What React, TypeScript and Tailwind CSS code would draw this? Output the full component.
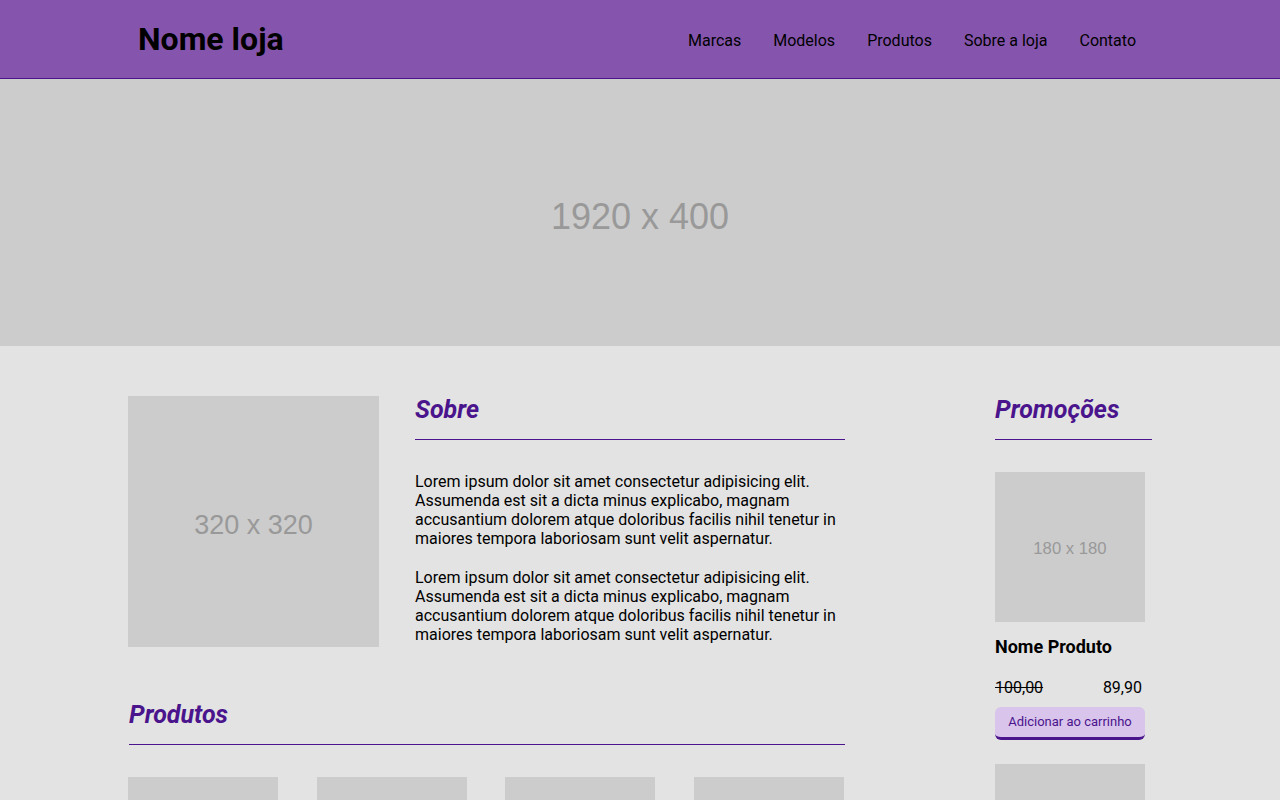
const navLinks = ["Marcas", "Modelos", "Produtos", "Sobre a loja", "Contato"];

const lorem =
  "Lorem ipsum dolor sit amet consectetur adipisicing elit. Assumenda est sit a dicta minus explicabo, magnam accusantium dolorem atque doloribus facilis nihil tenetur in maiores tempora laboriosam sunt velit aspernatur.";

const Placeholder = ({
  label,
  className,
  textClass,
}: {
  label: string;
  className: string;
  textClass: string;
}) => (
  <div
    className={`bg-[#cccccc] flex items-center justify-center shrink-0 ${className}`}
  >
    <span
      className={`text-[#999999] ${textClass}`}
      style={{ fontFamily: '"Liberation Sans", Arial, sans-serif' }}
    >
      {label}
    </span>
  </div>
);

const SectionTitle = ({ title }: { title: string }) => (
  <h2 className="text-[25px] font-bold italic text-[#4a148c] leading-[28px] pb-[15px] border-b border-b-[#4a148c]">
    {title}
  </h2>
);

const App = () => {
  return (
    <div
      className="min-h-screen bg-[#e3e3e3] text-black"
      style={{ fontFamily: "Roboto, 'Noto Sans', sans-serif" }}
    >
      <header className="bg-[#8555ad] border-b border-b-[#4a148c]">
        <div className="w-[1024px] mx-auto h-[78px] flex items-center justify-between">
          <h1 className="pl-[10px] text-[32px] font-bold leading-none">
            Nome loja
          </h1>
          <nav className="flex items-center pt-[4px]">
            {navLinks.map((link) => (
              <a key={link} href="#" className="px-4 text-base">
                {link}
              </a>
            ))}
          </nav>
        </div>
      </header>

      <Placeholder
        label="1920 x 400"
        className="w-full h-[267px] pt-[9px]"
        textClass="text-[36px]"
      />

      <main className="w-[1024px] mx-auto pt-[50px] flex justify-between">
        <div className="w-[717px]">
          <div className="flex gap-[36px]">
            <Placeholder
              label="320 x 320"
              className="w-[251px] h-[251px] pt-[8px]"
              textClass="text-[27px]"
            />
            <section className="flex-1">
              <SectionTitle title="Sobre" />
              <div className="mt-[32px] flex flex-col gap-[20px] leading-[19px]">
                <p>{lorem}</p>
                <p>{lorem}</p>
              </div>
            </section>
          </div>

          <section className="mt-[54px]">
            <div className="pl-[1px]">
              <SectionTitle title="Produtos" />
            </div>
            <div className="mt-[32px] flex gap-[38.6px]">
              {[0, 1, 2, 3].map((i) => (
                <Placeholder
                  key={i}
                  label="180 x 180"
                  className="w-[150px] h-[150px] pt-[4px]"
                  textClass="text-[16.7px]"
                />
              ))}
            </div>
          </section>
        </div>

        <aside className="w-[157px]">
          <SectionTitle title="Promoções" />
          <div className="mt-[32px] flex flex-col gap-[24px]">
            {[0, 1].map((i) => (
              <div key={i} className="w-[150px]">
                <Placeholder
                  label="180 x 180"
                  className="w-[150px] h-[150px] pt-[4px]"
                  textClass="text-[16.7px]"
                />
                <h3 className="mt-[14px] text-lg font-bold leading-[22px]">
                  Nome Produto
                </h3>
                <div className="mt-[20px] flex justify-between pr-[3px] leading-[19px]">
                  <span className="line-through">100,00</span>
                  <span>89,90</span>
                </div>
                <button className="mt-[10px] w-full h-[33px] rounded-md bg-[#d9c4ec] border-b-[3px] border-b-[#4a148c] text-[13px] text-[#4a148c]">
                  Adicionar ao carrinho
                </button>
              </div>
            ))}
          </div>
        </aside>
      </main>
    </div>
  );
};

export default App;
